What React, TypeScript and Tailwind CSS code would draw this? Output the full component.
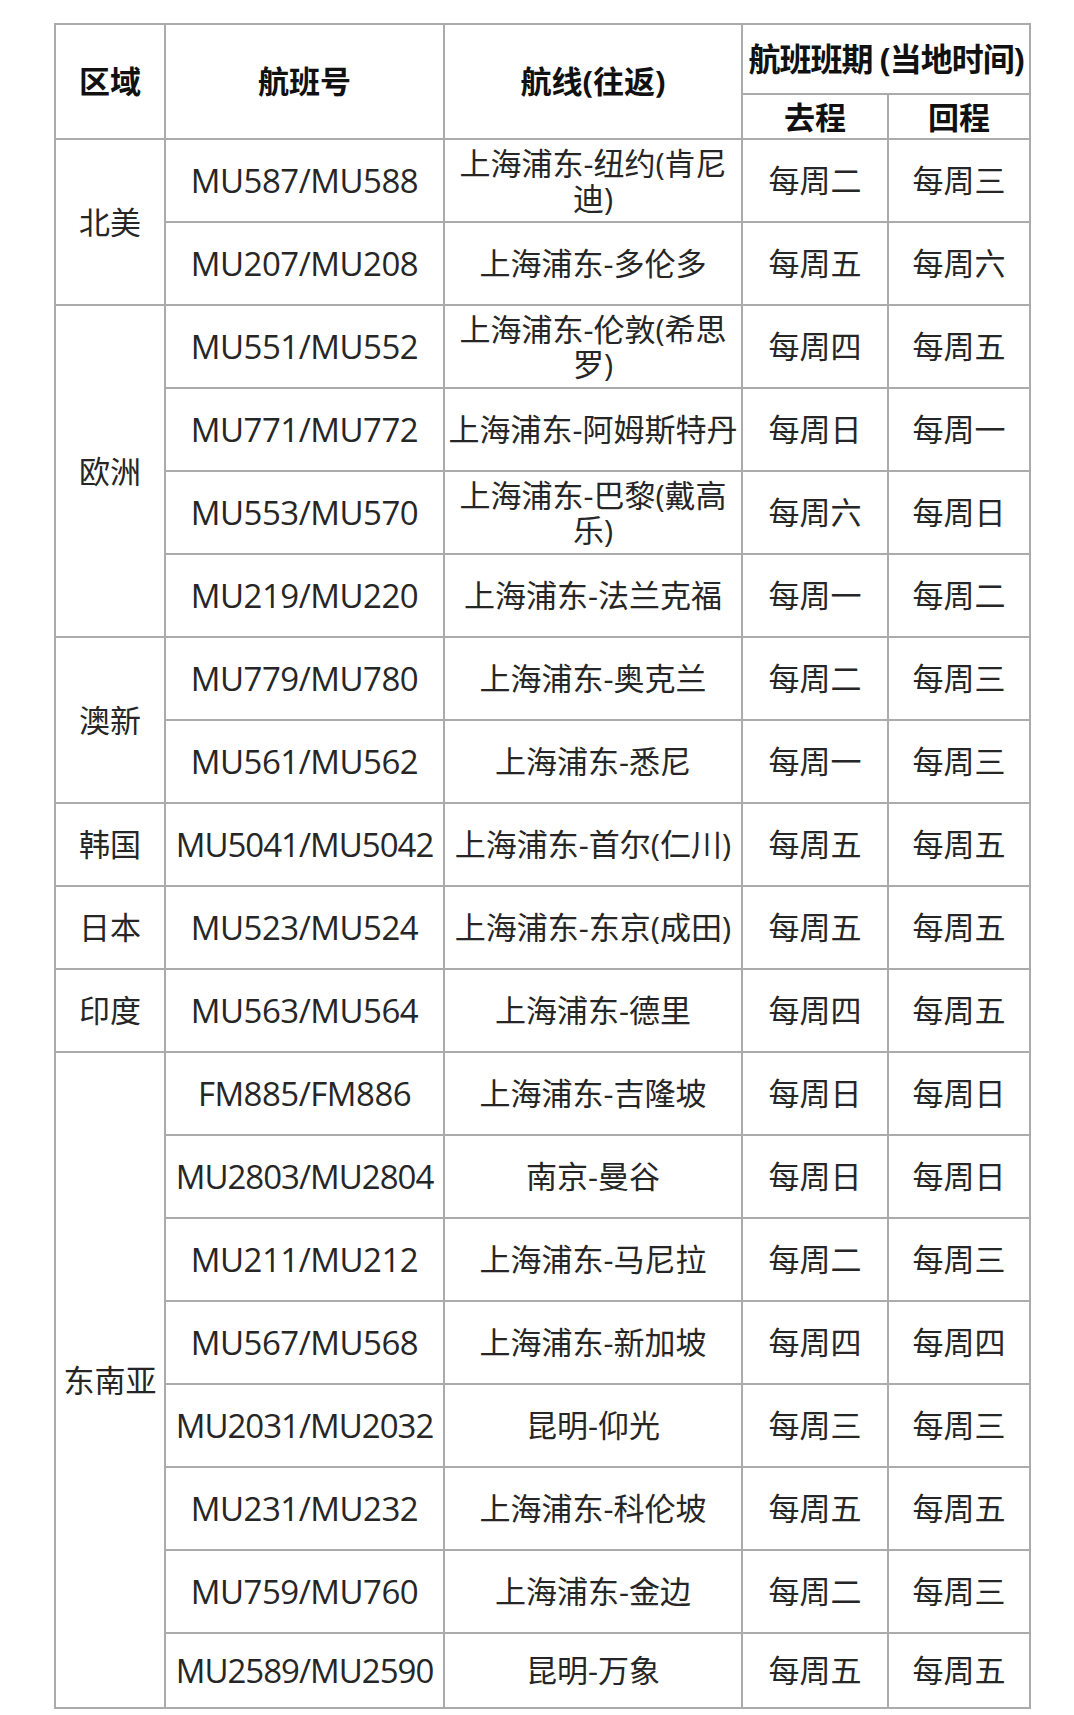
import { Fragment } from 'react'

type Flight = {
  no: string
  route: string[]
  out: string
  back: string
}

type Region = {
  name: string
  flights: Flight[]
}

const REGIONS: Region[] = [
  {
    name: '北美',
    flights: [
      { no: 'MU587/MU588', route: ['上海浦东-纽约(肯尼', '迪)'], out: '每周二', back: '每周三' },
      { no: 'MU207/MU208', route: ['上海浦东-多伦多'], out: '每周五', back: '每周六' },
    ],
  },
  {
    name: '欧洲',
    flights: [
      { no: 'MU551/MU552', route: ['上海浦东-伦敦(希思', '罗)'], out: '每周四', back: '每周五' },
      { no: 'MU771/MU772', route: ['上海浦东-阿姆斯特丹'], out: '每周日', back: '每周一' },
      { no: 'MU553/MU570', route: ['上海浦东-巴黎(戴高', '乐)'], out: '每周六', back: '每周日' },
      { no: 'MU219/MU220', route: ['上海浦东-法兰克福'], out: '每周一', back: '每周二' },
    ],
  },
  {
    name: '澳新',
    flights: [
      { no: 'MU779/MU780', route: ['上海浦东-奥克兰'], out: '每周二', back: '每周三' },
      { no: 'MU561/MU562', route: ['上海浦东-悉尼'], out: '每周一', back: '每周三' },
    ],
  },
  {
    name: '韩国',
    flights: [{ no: 'MU5041/MU5042', route: ['上海浦东-首尔(仁川)'], out: '每周五', back: '每周五' }],
  },
  {
    name: '日本',
    flights: [{ no: 'MU523/MU524', route: ['上海浦东-东京(成田)'], out: '每周五', back: '每周五' }],
  },
  {
    name: '印度',
    flights: [{ no: 'MU563/MU564', route: ['上海浦东-德里'], out: '每周四', back: '每周五' }],
  },
  {
    name: '东南亚',
    flights: [
      { no: 'FM885/FM886', route: ['上海浦东-吉隆坡'], out: '每周日', back: '每周日' },
      { no: 'MU2803/MU2804', route: ['南京-曼谷'], out: '每周日', back: '每周日' },
      { no: 'MU211/MU212', route: ['上海浦东-马尼拉'], out: '每周二', back: '每周三' },
      { no: 'MU567/MU568', route: ['上海浦东-新加坡'], out: '每周四', back: '每周四' },
      { no: 'MU2031/MU2032', route: ['昆明-仰光'], out: '每周三', back: '每周三' },
      { no: 'MU231/MU232', route: ['上海浦东-科伦坡'], out: '每周五', back: '每周五' },
      { no: 'MU759/MU760', route: ['上海浦东-金边'], out: '每周二', back: '每周三' },
      { no: 'MU2589/MU2590', route: ['昆明-万象'], out: '每周五', back: '每周五' },
    ],
  },
]

const cell = 'border-2 border-[#ababab] p-0 text-center align-middle'

export default function App() {
  const lastRegion = REGIONS.length - 1

  return (
    <div className="min-h-[1715px] bg-white pl-[54px] pt-[23px] font-['Open_Sans','Noto_Sans_CJK_SC',sans-serif] text-[#262626]">
      <table className="w-[975px] table-fixed border-collapse border-2 border-[#ababab]">
        <colgroup>
          <col className="w-[110px]" />
          <col className="w-[279px]" />
          <col className="w-[298px]" />
          <col className="w-[146px]" />
          <col className="w-[142px]" />
        </colgroup>
        <thead className="text-[31px] font-bold text-[#111]">
          <tr className="h-[70px]">
            <th rowSpan={2} className={cell}>区域</th>
            <th rowSpan={2} className={cell}>航班号</th>
            <th rowSpan={2} className={cell}>航线(往返)</th>
            <th colSpan={2} className={`${cell} whitespace-nowrap text-[32px] tracking-[-1px]`}>
              航班班期 (当地时间)
            </th>
          </tr>
          <tr className="h-[45px]">
            <th className={`${cell} leading-[38px]`}>去程</th>
            <th className={`${cell} leading-[38px]`}>回程</th>
          </tr>
        </thead>
        <tbody className="text-[31px] leading-[35px]">
          {REGIONS.map((region, ri) => (
            <Fragment key={region.name}>
              {region.flights.map((f, fi) => {
                const isLast = ri === lastRegion && fi === region.flights.length - 1
                // the long 6-digit pairs need tighter spacing to stay inside the column
                const tight = f.no.length > 11
                return (
                  <tr key={f.no} className={isLast ? 'h-[75px]' : 'h-[83px]'}>
                    {fi === 0 && (
                      <td rowSpan={region.flights.length} className={cell}>
                        {region.name}
                      </td>
                    )}
                    <td
                      className={`${cell} whitespace-nowrap text-[33px] ${
                        tight ? 'tracking-[-1px]' : 'tracking-[-0.5px]'
                      }`}
                    >
                      {f.no}
                    </td>
                    <td className={`${cell} whitespace-nowrap`}>
                      {f.route.map((line, li) => (
                        <div key={li}>{line}</div>
                      ))}
                    </td>
                    <td className={cell}>{f.out}</td>
                    <td className={cell}>{f.back}</td>
                  </tr>
                )
              })}
            </Fragment>
          ))}
        </tbody>
      </table>
    </div>
  )
}
